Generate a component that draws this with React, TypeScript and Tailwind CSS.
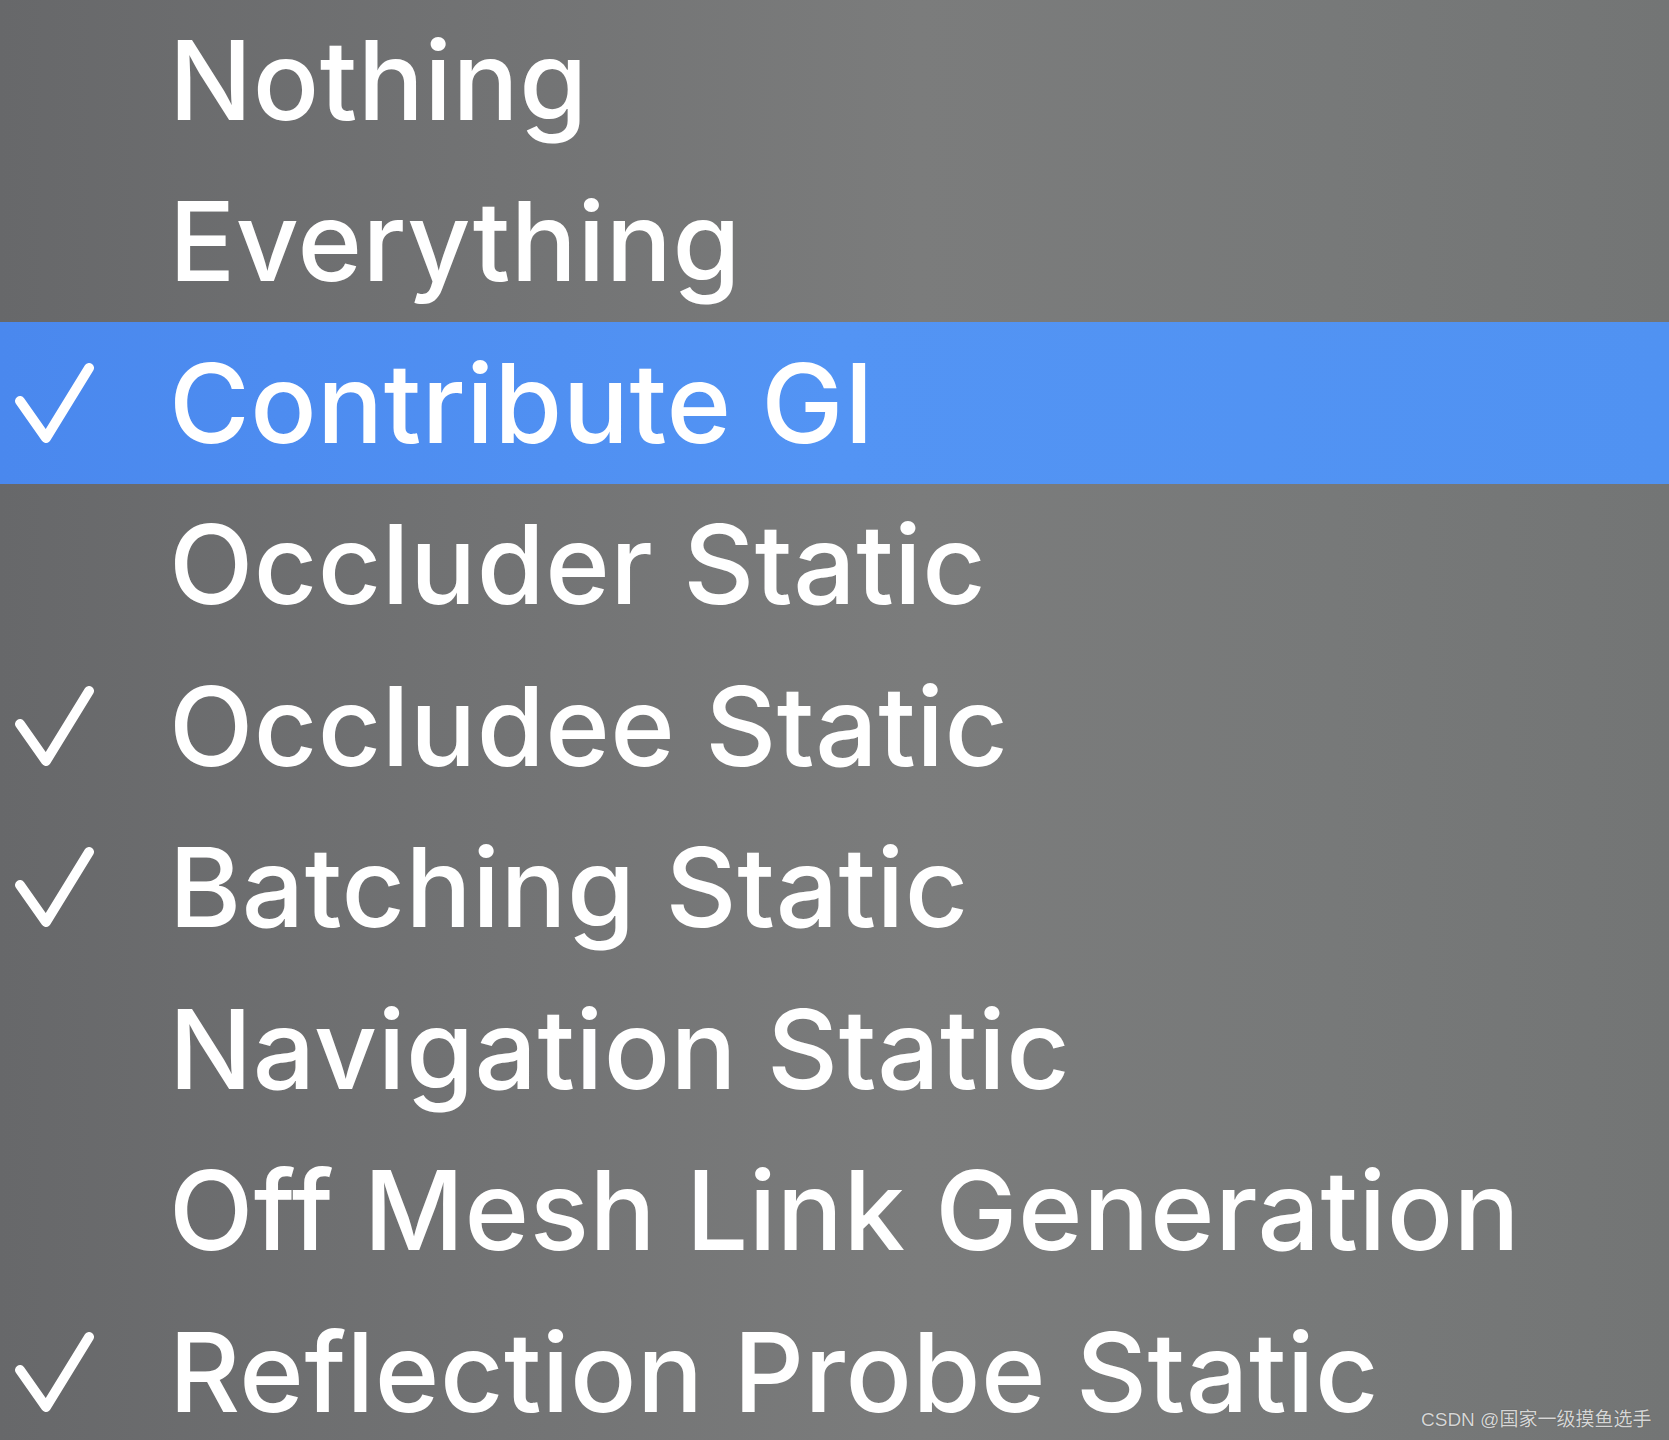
import React from "react";

const items: { label: string; checked: boolean; active?: boolean }[] = [
  { label: "Nothing", checked: false },
  { label: "Everything", checked: false },
  { label: "Contribute GI", checked: true, active: true },
  { label: "Occluder Static", checked: false },
  { label: "Occludee Static", checked: true },
  { label: "Batching Static", checked: true },
  { label: "Navigation Static", checked: false },
  { label: "Off Mesh Link Generation", checked: false },
  { label: "Reflection Probe Static", checked: true },
];

function Check() {
  return (
    <svg width="80" height="80" viewBox="0 0 80 80" className="shrink-0">
      <path
        d="M5 38 L31 75 L74 5"
        fill="none"
        stroke="white"
        strokeWidth="10"
        strokeLinecap="round"
        strokeLinejoin="round"
      />
    </svg>
  );
}

export default function App() {
  return (
    <div className="relative w-[1669px] h-[1440px] overflow-hidden bg-[linear-gradient(90deg,#67686a_0%,#727374_30%,#7b7c7c_55%,#777979_80%,#737575_100%)]">
      <div className="flex flex-col -mt-[1px]">
        {items.map((it) => (
          <div
            key={it.label}
            className={
              "flex items-center h-[161.5px] shrink-0 " +
              (it.active ? "bg-[linear-gradient(90deg,#4a88ee_0%,#5394f4_50%,#5092f2_100%)]" : "")
            }
          >
            <div className="w-[169px] shrink-0 pl-[15px] flex items-center">
              {it.checked ? <Check /> : null}
            </div>
            <span
              className="text-white whitespace-nowrap font-medium text-[110px] leading-none tracking-[0.5px] [font-family:Inter,'Liberation_Sans',sans-serif]"
            >
              {it.label}
            </span>
          </div>
        ))}
      </div>
      <div className="absolute left-[1421px] top-[1410px] text-[19px] leading-none text-[#d6d6d6] whitespace-nowrap [font-family:'Liberation_Sans','Noto_Sans_CJK_SC',sans-serif] [text-shadow:0_0_1px_rgba(0,0,0,0.4)]">
        CSDN @国家一级摸鱼选手
      </div>
    </div>
  );
}
